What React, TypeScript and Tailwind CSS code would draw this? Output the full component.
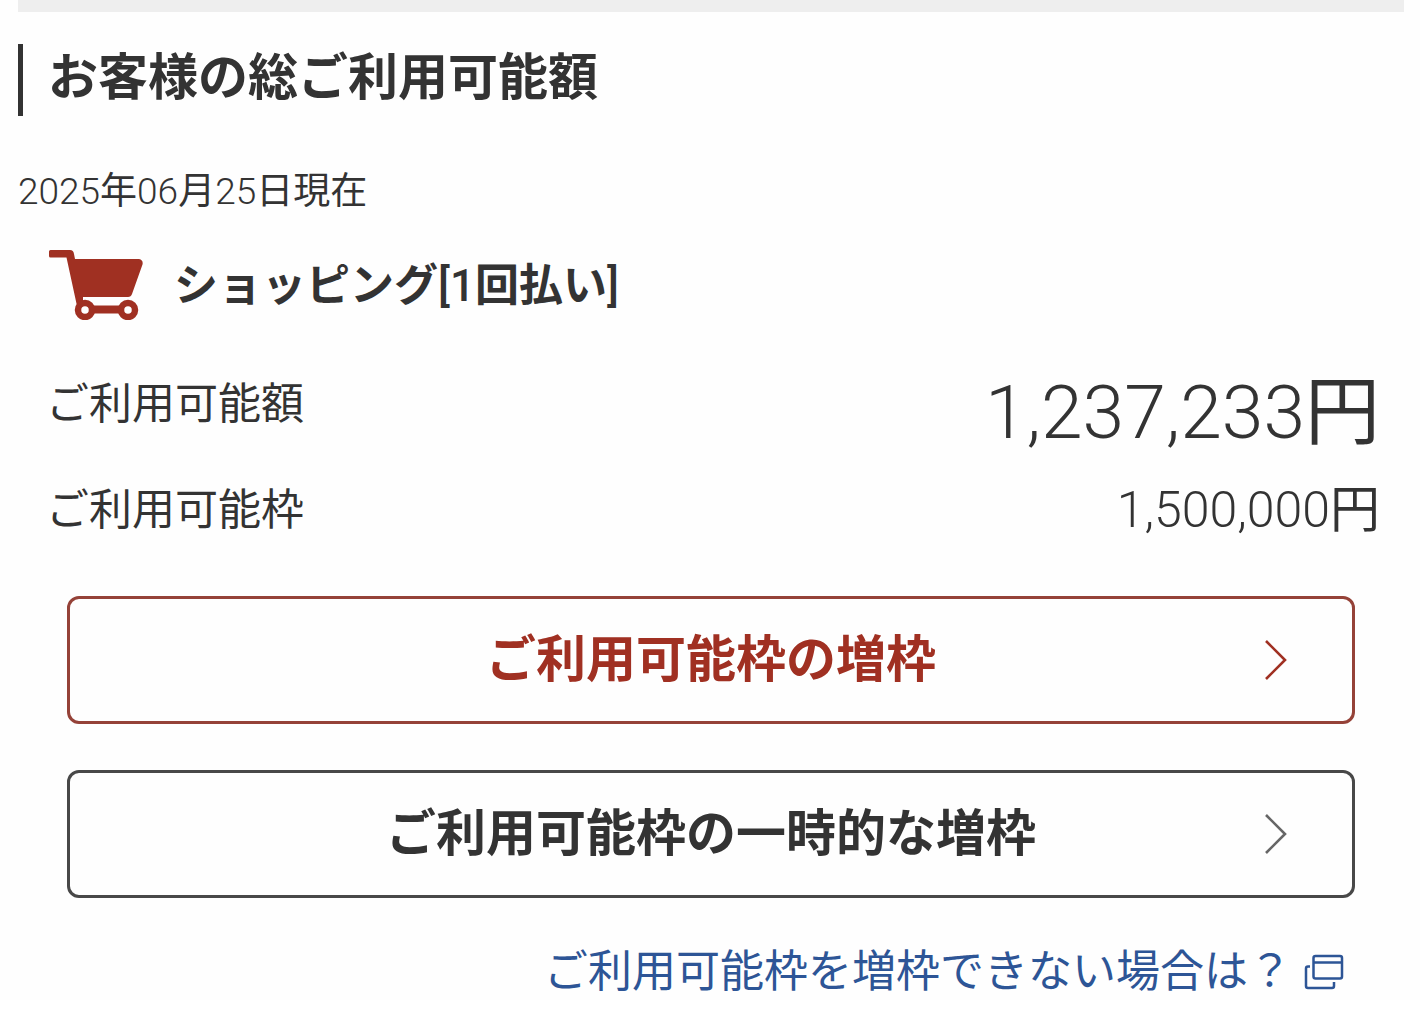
import React from "react";

function Chevron() {
  return (
    <svg className="h-11 w-7 shrink-0" viewBox="0 0 28 44" fill="none" stroke="currentColor" strokeWidth="2.6" aria-hidden="true">
      <path d="M6 3 L25 22 L6 41" />
    </svg>
  );
}

function Cart() {
  return (
    <svg className="h-[72px] w-24 shrink-0 text-[#a03022]" viewBox="0 0 96 72" aria-hidden="true">
      <path d="M2.5 2 H22 Q25.5 2 26 6 L27 11 H91 Q95.5 12 94.5 16.5 L84 46 Q83 49 80 49 H35 V58 H29 L18.500 9.500 H2.500 Q1 9.500 1 8 V3.500 Q1 2 2.500 2 Z" fill="currentColor" />
      <path d="M38 61.500 H80" stroke="currentColor" strokeWidth="8" />
      <circle cx="37" cy="62" r="7" fill="#fff" stroke="currentColor" strokeWidth="6.5" />
      <circle cx="80" cy="62" r="7" fill="#fff" stroke="currentColor" strokeWidth="6.5" />
    </svg>
  );
}

export default function App() {
  return (
    <div className="bg-[#fefefe] pr-4 pl-[18px] font-['Roboto','Noto_Sans_CJK_JP',sans-serif] text-[#333]">
      <div className="h-3 bg-[#eeeeee]" />
      <h1 className="mt-8 flex h-[72px] items-center border-l-[5px] border-[#333] pb-1 pl-[25px] text-[50px] leading-none font-bold">
        お客様の総ご利用可能額
      </h1>
      <p className="mt-14 text-[37px] leading-10">
        <span className="font-light">2025</span>年<span className="font-light">06</span>月<span className="font-light">25</span>日現在
      </p>
      <main className="pr-6 pl-7">
        <h2 className="mt-9 flex items-center gap-[30px] pl-0.5 text-[44px] leading-none font-bold">
          <Cart />
          <span className="pt-1">ショッピング<span className="font-medium">[1</span>回払い<span className="font-medium">]</span></span>
        </h2>
        <dl>
          <div className="mt-[50px] flex h-20 justify-between">
            <dt className="pt-2 text-[43px] leading-[52px]">ご利用可能額</dt>
            <dd className="text-[75px] leading-[84px]"><span className="font-light">1,237,233</span>円</dd>
          </div>
          <div className="mt-[30px] flex h-[60px] justify-between leading-[60px]">
            <dt className="text-[43px]">ご利用可能枠</dt>
            <dd className="text-[50px]"><span className="font-light">1,500,000</span>円</dd>
          </div>
        </dl>
        <div className="mt-14 flex flex-col gap-[46px] pr-[25px] pl-[21px]">
          <button className="grid h-32 grid-cols-[28px_1fr_28px] items-center rounded-xl border-[3px] border-[#954238] px-16 text-[50px] font-bold text-[#a03022]">
            <span className="col-start-2">ご利用可能枠の増枠</span>
            <Chevron />
          </button>
          <button className="grid h-32 grid-cols-[28px_1fr_28px] items-center rounded-xl border-[3px] border-[#484848] px-16 text-[50px] font-bold">
            <span className="col-start-2">ご利用可能枠の一時的な増枠</span>
            <span className="text-[#666]"><Chevron /></span>
          </button>
        </div>
        <a href="#" className="mt-[46px] mr-9 flex items-center justify-end gap-3 text-[44px] leading-14 text-[#2d5596]">
          ご利用可能枠を増枠できない場合は？
          <svg className="h-9 w-10" viewBox="0 0 40 36" fill="none" stroke="currentColor" strokeWidth="2.500" aria-hidden="true">
            <rect x="9.500" y="2" width="28.500" height="22.500" rx="2" />
            <path d="M9.500 8.500 H38 M6 12.500 H4 Q2 12.500 2 14.500 V32 Q2 34 4 34 H28 Q30 34 30 32 V28" />
          </svg>
        </a>
      </main>
    </div>
  );
}
